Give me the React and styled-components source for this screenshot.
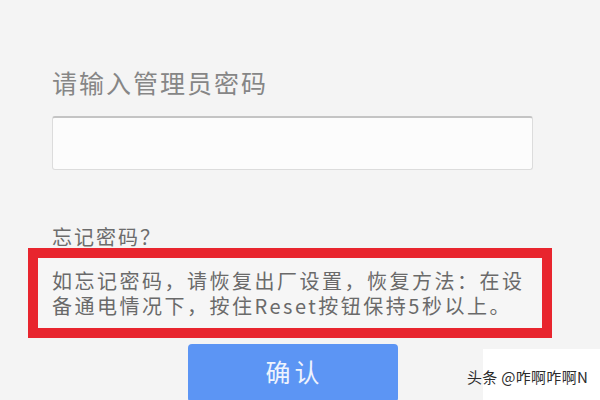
import React from "react";
import styled, { createGlobalStyle } from "styled-components";

const Global = createGlobalStyle`
  html, body { margin: 0; padding: 0; background: #f4f4f4; }
  body { width: 600px; height: 400px; overflow: hidden; position: relative; }
`;

const Page = styled.div`
  width: 600px;
  height: 400px;
  background: #f4f4f4;
  padding: 66px 0 0 52px;
  box-sizing: border-box;
  font-family: "Noto Sans CJK SC", "Noto Sans", sans-serif;
`;

const Column = styled.div`
  width: 481px;
  display: flex;
  flex-direction: column;
`;

const Title = styled.div`
  font-size: 25px;
  line-height: 32px;
  letter-spacing: 2px;
  color: #868686;
  margin: 0 0 18px 0;
`;

const Input = styled.input`
  box-sizing: border-box;
  width: 481px;
  height: 54px;
  background: #fcfcfc;
  border: 1px solid #dcdcdc;
  border-top: 2px solid #c4c4c4;
  border-radius: 3px;
  outline: none;
`;

const Forgot = styled.div`
  margin-top: 56px;
  font-size: 20px;
  line-height: 22px;
  letter-spacing: 2px;
  color: #6c6c6c;
  height: 22px;
`;

const Notice = styled.div`
  margin-left: -24px;
  width: 524px;
  box-sizing: border-box;
  border: 10px solid #e8252e;
  padding: 10px 10px 10px 14px;
  font-size: 20px;
  line-height: 25px;
  letter-spacing: 2.5px;
  color: #6a6a6a;
  white-space: nowrap;
  background: #f6f6f6;
`;

const Button = styled.button`
  align-self: center;
  margin-top: 6px;
  width: 210px;
  height: 58px;
  border: none;
  border-radius: 4px;
  background: #5c95f4;
  color: #eef3fd;
  font-family: "Noto Sans CJK SC", "Noto Sans", sans-serif;
  font-size: 25px;
  letter-spacing: 4px;
  padding: 0 0 4px 4px;
`;

const Watermark = styled.div`
  position: absolute;
  right: 0;
  bottom: 0;
  width: 117px;
  height: 51px;
  background: #ffffff;
  display: flex;
  align-items: center;
  padding-top: 4px;
  box-sizing: border-box;
`;

const MarkText = styled.span`
  margin-left: -16px;
  font-family: "Noto Sans CJK SC", "Noto Sans", sans-serif;
  font-size: 15px;
  color: #2c2c2c;
  white-space: nowrap;
  letter-spacing: 0.3px;
`;

export default function App() {
  return (
    <>
      <Global />
      <Page>
        <Column>
          <Title>请输入管理员密码</Title>
          <Input type="password" />
          <Forgot>忘记密码？</Forgot>
          <Notice>
            如忘记密码，请恢复出厂设置，恢复方法：在设
            <br />
            备通电情况下，按住Reset按钮保持5秒以上。
          </Notice>
          <Button>确认</Button>
        </Column>
      </Page>
      <Watermark>
        <MarkText>头条 @咋啊咋啊N</MarkText>
      </Watermark>
    </>
  );
}
